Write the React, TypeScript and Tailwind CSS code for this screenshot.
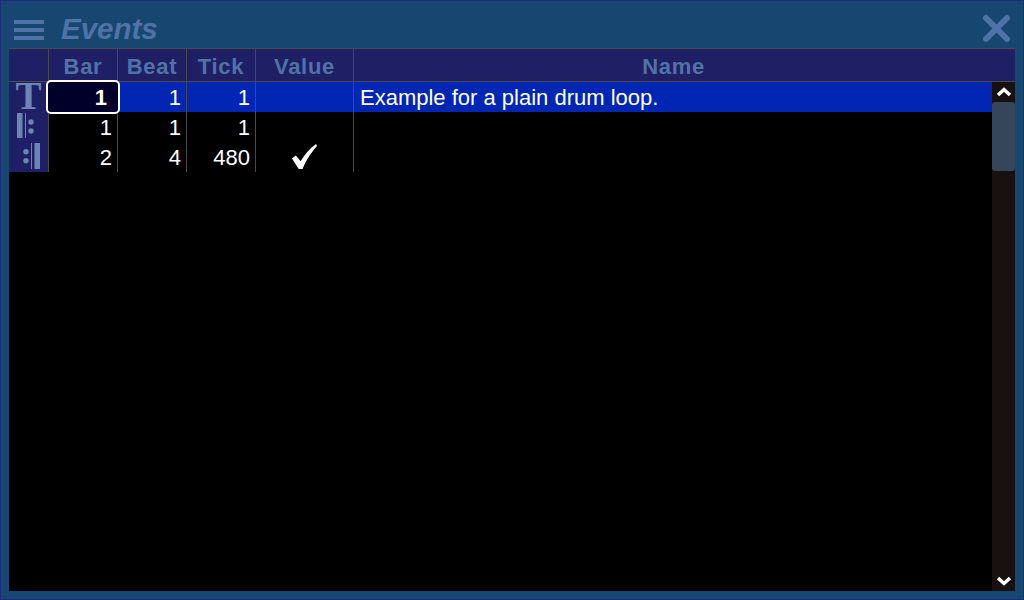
const font = { fontFamily: '"Liberation Sans", Arial, sans-serif' };

const rowGrid = "grid grid-cols-[40px_69px_69px_69px_98px_1fr] grid-rows-[30px] h-[30px]";
const cell = "border-r border-[#4a4a4a] text-right pr-[5px] leading-[32px] text-[22px] text-white";

function TIcon() {
  return (
    <span className="block text-center text-[#6c86b4] font-bold text-[39px] leading-[28px] w-[39px]" style={{ fontFamily: '"Liberation Serif", serif' }}>
      T
    </span>
  );
}

function RepeatStart() {
  return (
    <svg width="39" height="30" viewBox="0 0 39 30" className="block">
      <rect x="8" y="1" width="5.5" height="25" fill="#6c86b4" />
      <rect x="16" y="1" width="1" height="25" fill="#6c86b4" />
      <circle cx="22" cy="10" r="2.7" fill="#6c86b4" />
      <circle cx="22" cy="19" r="2.7" fill="#6c86b4" />
    </svg>
  );
}

function RepeatEnd() {
  return (
    <svg width="39" height="30" viewBox="0 0 39 30" className="block">
      <circle cx="17" cy="9.7" r="2.7" fill="#6c86b4" />
      <circle cx="17" cy="18.7" r="2.7" fill="#6c86b4" />
      <rect x="22" y="1" width="1" height="26" fill="#6c86b4" />
      <rect x="25.5" y="1" width="5.5" height="26" fill="#6c86b4" />
    </svg>
  );
}

const rows = [
  { icon: <TIcon />, bar: "1", beat: "1", tick: "1", value: false, name: "Example for a plain drum loop.", active: true },
  { icon: <RepeatStart />, bar: "1", beat: "1", tick: "1", value: false, name: "", active: false },
  { icon: <RepeatEnd />, bar: "2", beat: "4", tick: "480", value: true, name: "", active: false },
];

export default function App() {
  return (
    <div className="w-[1024px] h-[600px] overflow-hidden bg-[#174671] border border-[#1f2a80] flex flex-col" style={font}>
      <div className="h-[47px] flex items-center pl-[13px] pr-[11px] shrink-0">
        <svg width="31" height="20" viewBox="0 0 31 20" className="block mt-[10px]">
          <rect x="0" y="0" width="30" height="4" fill="#4f73a6" />
          <rect x="0" y="8" width="30" height="4" fill="#4f73a6" />
          <rect x="0" y="16" width="30" height="4" fill="#4f73a6" />
        </svg>
        <span className="ml-[16px] mt-[9px] text-[29.5px] leading-[32px] font-bold italic text-[#4f73a6]">Events</span>
        <svg width="30" height="30" viewBox="0 0 30 30" className="block ml-auto mt-[8px]">
          <path d="M4 4 L25 25 M25 4 L4 25" stroke="#4f73a6" strokeWidth="6" strokeLinecap="round" />
        </svg>
      </div>
      <div className="ml-[8px] mr-[8px] mb-[8px] flex-1 flex flex-col bg-black min-h-0">
        <div className="grid grid-cols-[40px_69px_69px_69px_98px_1fr] h-[34px] shrink-0 bg-[#1f1f66] border-y border-[#4a4a4a] text-[#4f73a6] text-[22px] font-bold leading-[35px] text-center tracking-[0.7px]">
          <div className="border-r border-[#4a4a4a]" />
          <div className="border-r border-[#4a4a4a]">Bar</div>
          <div className="border-r border-[#4a4a4a]">Beat</div>
          <div className="border-r border-[#4a4a4a]">Tick</div>
          <div className="border-r border-[#4a4a4a]">Value</div>
          <div className="pr-[22px]">Name</div>
        </div>
        <div className="flex-1 flex min-h-0">
          <div className="flex-1 min-w-0">
            {rows.map((r, i) => (
              <div key={i} className={`${rowGrid} ${r.active ? "bg-[#0026b3]" : ""}`}>
                <div className="bg-[#1f1f66] border-r border-[#4a4a4a]">{r.icon}</div>
                {r.active ? (
                  <div className="relative border-r border-[#4a4a4a]">
                    <div className="absolute left-[-3px] top-[-2px] w-[74px] h-[34px] rounded-[5px] border-2 border-white bg-[#00002b] text-right pr-[11px] text-white font-bold text-[22px] leading-[32px]">
                      {r.bar}
                    </div>
                  </div>
                ) : (
                  <div className={cell}>{r.bar}</div>
                )}
                <div className={cell}>{r.beat}</div>
                <div className={cell}>{r.tick}</div>
                <div className="border-r border-[#4a4a4a] flex items-center justify-center">
                  {r.value && (
                    <svg width="25" height="25" viewBox="0 0 26 26" className="block mb-[2px]">
                      <path d="M0 15 L4 12 L9 18 C13 11 18 5 25 0 L26 2 C20 9 15 16 11 26 L7 26 Z" fill="white" />
                    </svg>
                  )}
                </div>
                <div className="pl-[6px] leading-[32px] text-[22px] text-white whitespace-nowrap">{r.name}</div>
              </div>
            ))}
          </div>
          <div className="w-[23px] shrink-0 bg-[#191010] flex flex-col items-center">
            <svg width="16" height="10" viewBox="0 0 16 10" className="block mt-[5px]">
              <path d="M2 8 L8 2.5 L14 8" fill="none" stroke="white" strokeWidth="3.5" />
            </svg>
            <div className="w-[23px] h-[69px] mt-[5px] rounded-[3px] bg-[#35465a]" />
            <svg width="16" height="10" viewBox="0 0 16 10" className="block mt-auto mb-[5px]">
              <path d="M2 2 L8 7.5 L14 2" fill="none" stroke="white" strokeWidth="3.5" />
            </svg>
          </div>
        </div>
      </div>
    </div>
  );
}
